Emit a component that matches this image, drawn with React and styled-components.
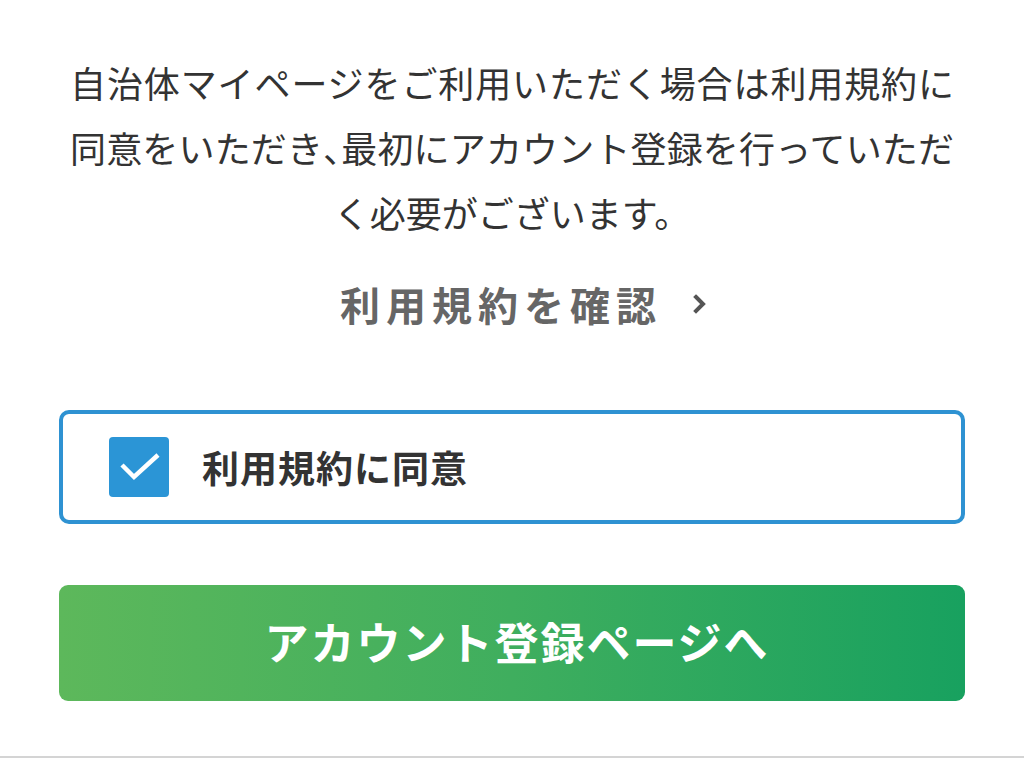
import React, { useState } from 'react';
import styled, { createGlobalStyle } from 'styled-components';

const GlobalStyle = createGlobalStyle`
  html, body {
    margin: 0;
    padding: 0;
    background: #fff;
  }
  body {
    font-family: "Noto Sans CJK JP", "Noto Sans", sans-serif;
    color: #333;
  }
`

const Page = styled.div`
  box-sizing: border-box;
  height: 758px;
  border-bottom: 2px solid #d4d4d4;
  display: flex;
  flex-direction: column;
  align-items: center;
  padding-top: 50px;
`

const Lead = styled.p`
  width: 884px;
  margin: 0;
  font-size: 36px;
  line-height: 65px;
  text-align: justify;
  text-align-last: center;
  color: #333;
`

const Punct = styled.span`
  font-feature-settings: "halt";
`

const TermsLink = styled.a`
  display: flex;
  align-items: center;
  gap: 30px;
  margin-top: 29px;
  margin-left: 24px;
  height: 60px;
  font-size: 40px;
  font-weight: 700;
  letter-spacing: 6px;
  color: #666;
  text-decoration: none;
  cursor: pointer;

  svg {
    width: 16px;
    height: 20px;
  }
`

const AgreeBox = styled.label`
  box-sizing: border-box;
  width: 906px;
  height: 114px;
  margin-top: 76px;
  border: 4px solid #2e92d2;
  border-radius: 10px;
  display: flex;
  align-items: center;
  padding-left: 46px;
  gap: 33px;
  cursor: pointer;
`

const Check = styled.span`
  width: 60px;
  height: 60px;
  border-radius: 4px;
  background: ${p => (p.checked ? '#2b95d6' : '#fff')};
  border: ${p => (p.checked ? 'none' : '3px solid #aaa')};
  box-sizing: border-box;
  display: flex;
`

const AgreeText = styled.span`
  font-size: 37px;
  font-weight: 700;
  color: #333;
  letter-spacing: 1px;
`

const SubmitButton = styled.button`
  width: 906px;
  height: 116px;
  margin-top: 61px;
  border: none;
  border-radius: 9px;
  background: linear-gradient(90deg, #5db85b 0%, #3fae5e 50%, #18a15f 100%);
  color: #fff;
  font-family: inherit;
  font-size: 44px;
  font-weight: 700;
  letter-spacing: 2px;
  padding: 0 0 4px 10px;
  cursor: pointer;
`

export default function App() {
  const [checked, setChecked] = useState(true);

  return (
    <>
      <GlobalStyle />
      <Page>
        <Lead>
          自治体マイページをご利用いただく場合は利用規約に同意をいただき<Punct>、</Punct>最初にアカウント登録を行っていただく必要がございます。
        </Lead>
        <TermsLink>
          利用規約を確認
          <svg viewBox="0 0 16 20" fill="none">
            <path d="M4 3 L11 10 L4 17" stroke="#555" strokeWidth="4" strokeLinecap="square" />
          </svg>
        </TermsLink>
        <AgreeBox onClick={() => setChecked(!checked)}>
          <Check checked={checked}>
            {checked && (
              <svg width="60" height="60" viewBox="0 0 60 60" fill="none">
                <path d="M13 28 L25 40 L49 18" stroke="#fff" strokeWidth="4.5" />
              </svg>
            )}
          </Check>
          <AgreeText>利用規約に同意</AgreeText>
        </AgreeBox>
        <SubmitButton>アカウント登録ページへ</SubmitButton>
      </Page>
    </>
  );
}
